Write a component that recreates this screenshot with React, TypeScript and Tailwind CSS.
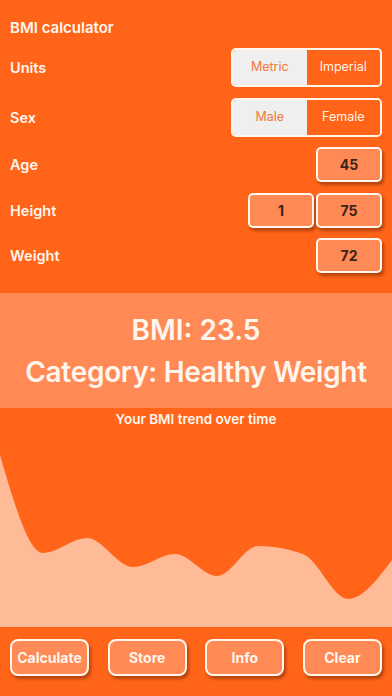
import React from 'react'

// trend samples, chart-local coords (392 x 197)
const pts: [number, number][] = [
  [0, 25], [43, 123], [87, 108], [133, 137], [175, 124],
  [217, 146], [258, 116], [303, 124], [348, 169], [392, 130],
]

function monotonePath(p: [number, number][]) {
  const n = p.length
  const s: number[] = []
  for (let i = 0; i < n - 1; i++) s.push((p[i + 1][1] - p[i][1]) / (p[i + 1][0] - p[i][0]))
  const m: number[] = new Array(n).fill(0)
  for (let i = 1; i < n - 1; i++) {
    const s0 = s[i - 1], s1 = s[i]
    if (s0 * s1 <= 0) { m[i] = 0; continue }
    const h0 = p[i][0] - p[i - 1][0], h1 = p[i + 1][0] - p[i][0]
    const q = (s0 * h1 + s1 * h0) / (h0 + h1)
    m[i] = (Math.sign(s0) + Math.sign(s1)) * Math.min(Math.abs(s0), Math.abs(s1), 0.5 * Math.abs(q))
  }
  m[0] = (3 * s[0] - m[1]) / 2
  m[n - 1] = (3 * s[n - 2] - m[n - 2]) / 2
  let d = `M${p[0][0]},${p[0][1]}`
  for (let i = 0; i < n - 1; i++) {
    const h = (p[i + 1][0] - p[i][0]) / 3
    d += ` C${p[i][0] + h},${p[i][1] + h * m[i]} ${p[i + 1][0] - h},${p[i + 1][1] - h * m[i + 1]} ${p[i + 1][0]},${p[i + 1][1]}`
  }
  return d
}

function Segmented({ left, right }: { left: string; right: string }) {
  return (
    <div className="flex h-[39px] w-[151px] overflow-hidden rounded-[5px] border-2 border-[#fff6ee] text-[12.5px]">
      <div className="flex flex-1 items-center justify-center bg-[#efefef] text-[#f2773d]">{left}</div>
      <div className="flex flex-1 items-center justify-center bg-[#ff6418] text-[#fff3ea]">{right}</div>
    </div>
  )
}

function ValueBox({ v }: { v: string }) {
  return (
    <div className="flex h-[35px] w-[66px] items-center justify-center rounded-[5px] border-2 border-[#fff6ee] bg-[#ff8a55] text-[14px] font-bold text-[#3b2418] shadow-[2px_3px_3px_rgba(90,30,0,0.45)]">
      {v}
    </div>
  )
}

function Row({ label, children, className = '' }: { label: string; children: React.ReactNode; className?: string }) {
  return (
    <div className={`flex items-center justify-between pl-[10px] pr-[10px] ${className}`}>
      <span className="text-[14.5px] font-semibold text-[#fff6ee]">{label}</span>
      <div className="flex gap-[2px]">{children}</div>
    </div>
  )
}

export default function App() {
  const line = monotonePath(pts)
  const area = `${line} L392,197 L0,197 Z`

  return (
    <div className="flex h-[696px] w-[392px] flex-col overflow-hidden bg-[#ff6418] font-['Inter',sans-serif] text-[#fff6ee]">
      {/* Form */}
      <p className="mt-[18px] pl-[10px] text-[15px] font-semibold leading-5">BMI calculator</p>
      <Row label="Units" className="mt-[10px]"><Segmented left="Metric" right="Imperial" /></Row>
      <Row label="Sex" className="mt-[11px]"><Segmented left="Male" right="Female" /></Row>
      <Row label="Age" className="mt-[10px]"><ValueBox v="45" /></Row>
      <Row label="Height" className="mt-[11px]"><ValueBox v="1" /><ValueBox v="75" /></Row>
      <Row label="Weight" className="mt-[10px]"><ValueBox v="72" /></Row>

      {/* Result */}
      <div className="mt-[20px] flex h-[115px] flex-col items-center justify-center gap-[4px] bg-[#ff8a56] font-semibold">
        <p className="text-[28px] leading-[38px]">BMI: 23.5</p>
        <p className="text-[28px] leading-[38px] tracking-[-0.3px]">Category: Healthy Weight</p>
      </div>

      <p className="flex h-[22px] items-center justify-center text-[13.5px] font-semibold">Your BMI trend over time</p>

      {/* Chart */}
      <div className="h-[197px]">
        <svg width="392" height="197" viewBox="0 0 392 197" className="block">
          <path d={area} fill="#ffbb98" />
        </svg>
      </div>

      {/* Buttons */}
      <div className="flex justify-between px-[10px] pt-[12px]">
        {['Calculate', 'Store', 'Info', 'Clear'].map((b) => (
          <button
            key={b}
            className="flex h-[37px] w-[79px] items-center justify-center rounded-[8px] border-2 border-[#fff6ee] bg-[#ff8a55] text-[14px] font-bold text-[#fff6ee] shadow-[2px_3px_3px_rgba(90,30,0,0.45)]"
          >
            {b}
          </button>
        ))}
      </div>
    </div>
  )
}
